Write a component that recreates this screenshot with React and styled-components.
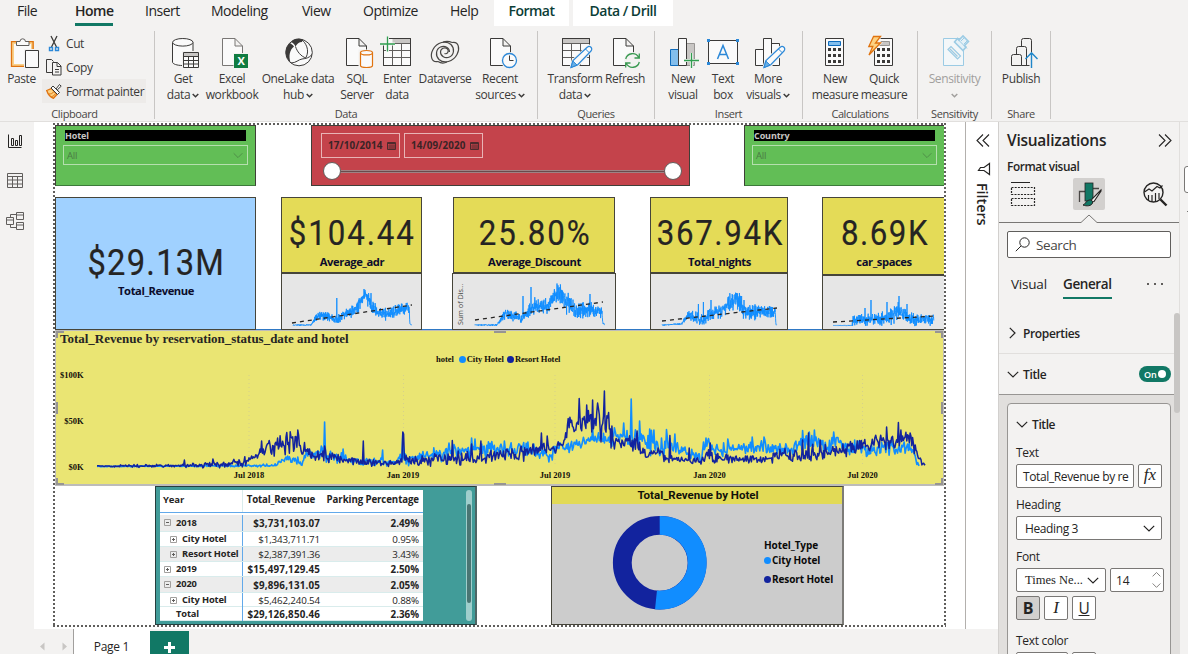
import React from 'react';
import styled, { createGlobalStyle, css } from 'styled-components';

const Global = createGlobalStyle`
  *, *::before, *::after { box-sizing: border-box; }
  body { margin: 0; background: #f3f2f1; overflow: hidden; }
  #root { width: 1188px; height: 654px; overflow: hidden; }
`;

const Window = styled.div`
  width: 1188px;
  height: 654px;
  display: flex;
  flex-direction: column;
  background: #f3f2f1;
  color: #252423;
  font-family: 'Open Sans', 'Noto Sans', sans-serif;
  font-size: 12px;
  letter-spacing: -0.4px;
  white-space: nowrap;
  overflow: hidden;
`;

/* ---------- menu ---------- */
const Menu = styled.nav`
  display: flex;
  height: 26px;
  flex: none;
  padding-left: 17px;
  font-size: 14px;
  letter-spacing: -0.5px;
`;
const MenuItem = styled.div`
  width: ${p => p.$w}px;
  margin-right: ${p => p.$gap}px;
  height: 26px;
  line-height: 22px;
  font-weight: ${p => (p.$bold ? 600 : 400)};
  color: ${p => (p.$context ? '#0b3d36' : '#252423')};
  background: ${p => (p.$context ? '#fff' : 'none')};
  text-align: ${p => (p.$context ? 'center' : 'left')};
  border-bottom: ${p => (p.$active ? '3px solid #117865' : 'none')};
`;

/* ---------- ribbon ---------- */
const Ribbon = styled.div`
  display: flex;
  height: 95px;
  flex: none;
  padding-top: 5px;
`;
const Group = styled.div`
  width: ${p => p.$w}px;
  height: 88px;
  padding-left: ${p => p.$pad || 0}px;
  border-right: 1px solid #c8c6c4;
  display: flex;
  flex-direction: column;
`;
const GroupItems = styled.div`
  display: flex;
  height: 75px;
`;
const GroupName = styled.div`
  margin-left: -${p => p.$pad || 0}px;
  text-align: center;
  font-size: 11px;
  letter-spacing: -0.4px;
  line-height: 16px;
  color: #484644;
  padding-right: ${p => p.$shift || 0}px;
`;
const Tool = styled.div`
  width: ${p => p.$w}px;
  height: 75px;
  padding-top: 5px;
  display: flex;
  flex-direction: column;
  align-items: center;
  color: ${p => (p.$off ? '#a19f9d' : '#3b3a39')};
  line-height: 16px;
  flex: none;
`;
const ToolIcon = styled.svg`
  width: 32px;
  height: 32px;
  flex: none;
  overflow: visible;
  margin-bottom: 3px;
  fill: none;
`;
const ToolLine = styled.div`
  display: flex;
  align-items: center;
  justify-content: center;
  height: 16px;
  gap: 2px;
`;
const ClipList = styled.div`
  display: flex;
  flex-direction: column;
  width: 104px;
`;
const ClipItem = styled.div`
  display: flex;
  align-items: center;
  gap: 4px;
  height: 24px;
  padding-left: 4px;
  color: #3b3a39;
  background: ${p => (p.$hover ? '#edebe9' : 'none')};
`;

const Caret = () => (
  <svg width="7" height="5" viewBox="0 0 7 5">
    <path d="M.7 1l2.800 2.700L6.300 1" fill="none" stroke="currentColor" strokeWidth="1.500" />
  </svg>
);

const K = '#3b3a39';
const Doc = ({ x = 6.5, r = 20, c = K }) => (
  <path d={`M${x} 2.5h${r - 7.5}l7.500 7.500v19.500h-${r}z M${x + r - 7.5} 2.500v7.500h7.500`} fill="#fafafa" stroke={c} />
);
const Grid = ({ x = 3.5, header = x }) => (
  <g>
    <path d={`M${x} 2.500h27v27h-27z`} fill="#fafafa" stroke={K} />
    <path d={`M${header + 0.5} 3h${x + 26 - header}v4h-${x + 26 - header}z`} fill="#c8c6c4" />
    <path d={`M${x} 7.500h27M${x} 14.500h27M${x} 21.500h27M${x + 9} 7.500v22M${x + 18} 7.500v22`} stroke="#605e5c" />
    <path d={`M${x} 2.500h27v27h-27z`} stroke={K} />
  </g>
);
const Pencil = () => (
  <g>
    <path d="M12 31.500l2-7L28.500 11a2.500 2.500 0 0 1 4 3.500L19 29z" fill="#fafafa" stroke="#f3f2f1" strokeWidth="3" />
    <path d="M12 31.500l2-7L28.200 11.300a2.600 2.600 0 0 1 3.800 3.700L18.500 29z" fill="#fafafa" stroke="#2b88d8" strokeWidth="1.200" />
    <path d="M12 31.500l1.800-6.500l4.200 4z" fill="#69afe5" stroke="#2b88d8" />
    <path d="M26.500 13l3.700 3.700" stroke="#2b88d8" />
  </g>
);
const Plus = ({ x, y }) => (
  <g>
    <path d={`M${x} ${y - 7.5}v15M${x - 7.5} ${y}h15`} stroke="#f3f2f1" strokeWidth="3" />
    <path d={`M${x} ${y - 7.5}v15M${x - 7.5} ${y}h15`} stroke="#2f9e4f" strokeWidth="1.300" />
  </g>
);
const Keys = ({ x }) => (
  <g fill={K}>
    {[12, 18, 24].map(y => [0, 5, 10].map(d => <rect key={`${y}${d}`} x={x + d} y={y} width="3" height="3" />))}
  </g>
);

const icons = {
  paste: (
    <g>
      <path d="M6.500 6.500h20v23h-20z" fill="#fafafa" stroke="#f9d08a" strokeWidth="3" />
      <path d="M5.500 5.700h21.600v24.600H5.500z" stroke="#e0730f" strokeWidth="1.300" />
      <path d="M10.500 9.500v-4h3.500a2.700 2.700 0 0 1 5.400 0H23v4z" fill="#fafafa" stroke="#605e5c" />
      <path d="M18 13h16v20H18z" fill="#f3f2f1" />
      <path d="M19.500 14.500h13v17h-13z" fill="#fafafa" stroke={K} />
    </g>
  ),
  get: (
    <g>
      <path d="M5.500 6.500v19.500c0 2 4.500 3.500 10.200 3.500s10.300-1.500 10.300-3.500V6.500z" fill="#fafafa" stroke={K} />
      <ellipse cx="15.800" cy="6.300" rx="10.200" ry="3.800" fill="#fafafa" stroke={K} />
      <path d="M15 15h19v19H15z" fill="#f3f2f1" />
      <path d="M16.500 16.500h15v15h-15z" fill="#fafafa" />
      <path d="M17 17h14v3H17z" fill="#c8c6c4" />
      <path d="M16.500 20.500h15M16.500 24.500h15M16.500 28h15M21.500 20v11M26.500 20v11M16.500 16.500h15v15h-15z" stroke={K} />
    </g>
  ),
  excel: (
    <g>
      <Doc c="#797775" />
      <rect x="17.500" y="17" width="16" height="16" fill="#f3f2f1" />
      <rect x="18" y="18" width="14" height="14" fill="#107c41" />
      <text x="25" y="29" textAnchor="middle" fontSize="11" fontWeight="700" fill="#fff">X</text>
    </g>
  ),
  onelake: (
    <g>
      <circle cx="17" cy="16.500" r="13.300" fill="#fafafa" stroke={K} />
      <path d="M9 6C11 2.500 16 1.500 21 3.200L20 6c-3 0-5 2-6.500 4.500C12.500 8 11 7 9 6z" fill={K} />
      <path d="M8 7c-6 5-5.500 14 .5 19.500C6.500 20 7.500 14 12 10.500c-1.500-2-2.500-2.500-4-3.500z" fill={K} />
      <path d="M13.500 10.500c1.500 5 5.500 10 10.500 11.500M20 4c3.500 2.500 8 10 4 17.500M9 27c5 0 7.500-3.500 11-4 4-.5 7-1 10-4.500" stroke={K} />
    </g>
  ),
  sql: (
    <g>
      <Doc x={5.5} />
      <path d="M17.500 13.500h16v20h-16z" fill="#f3f2f1" />
      <path d="M19.500 17v12.500c0 1.200 2.500 2 6 2s6-.8 6-2V17z" fill="#fafafa" stroke="#e0730f" strokeWidth="1.200" />
      <ellipse cx="25.500" cy="16.700" rx="6" ry="2.200" fill="#fafafa" stroke="#e0730f" strokeWidth="1.200" />
    </g>
  ),
  enter: (
    <g>
      <Grid x={2.5} header={11} />
      <path d="M0 0h14v1.500H0zM0 1h5v6H0z" fill="#f3f2f1" />
      <Plus x={6.5} y={8} />
    </g>
  ),
  dataverse: (
    <g stroke="#484644" strokeWidth="1.200">
      <path d="M9 25.500C2 27 1 19 4 13.500 8 6 17 4 22 8.500c4 4 3 10.500-1.500 12.500-4.500 2-9-1-9-5 0-3.500 4.500-5.500 7-3 2 2.500-.5 5.500-3 4.500" />
      <path d="M23 6.500C30 5 31 13 28 18.500 24 26 15 28 10 23.500c-4-4-3-10.500 1.500-12.500 4.500-2 9 1 9 5" />
      <path d="M9 25.500c3 2 6 2 9 .5M23 6.500c-3-1.500-6-1.500-9-.5" />
    </g>
  ),
  recent: (
    <g>
      <Doc />
      <circle cx="25.500" cy="24.500" r="8.500" fill="#f3f2f1" />
      <circle cx="25.500" cy="24.500" r="7" fill="#fafafa" stroke="#2b88d8" strokeWidth="1.300" />
      <path d="M25.500 19.500v5h4" stroke={K} />
    </g>
  ),
  transform: (<g><Grid /><Pencil /></g>),
  refresh: (
    <g>
      <Doc x={4.5} />
      <circle cx="23.500" cy="24.500" r="8.500" fill="#f3f2f1" />
      <path d="M16.700 23a7 7 0 0 1 13-1.500M30.300 26a7 7 0 0 1-13 1.500M30.300 17.500v4.500h-4.800M16.700 31.500V27h4.800" stroke="#3a9a52" strokeWidth="1.300" />
    </g>
  ),
  visual: (
    <g>
      <path d="M3.500 13.500h8v16h-8z" fill="#83beec" stroke="#0f6cbd" />
      <path d="M19.500 7.500h8v22h-8z" fill="#c8c6c4" stroke="#979593" />
      <path d="M11.500 2.500h8v27h-8z" fill="#fafafa" stroke={K} />
      <Plus x={24.5} y={24.5} />
    </g>
  ),
  textbox: (
    <g>
      <path d="M1.500 4.500h29v23h-29z" fill="#fafafa" stroke={K} />
      <path d="M0 3h3v3H0zM29 3h3v3h-3zM0 26h3v3H0zM29 26h3v3h-3z" fill="#2b88d8" />
      <path d="M10.500 23L16 9.500 21.500 23M12.500 18.500h7" stroke="#2b88d8" strokeWidth="1.500" />
    </g>
  ),
  more: (
    <g>
      <path d="M3.500 13.500h8v16h-8zM19.500 7.500h8v22h-8zM11.500 2.500h8v27h-8z" fill="#fafafa" stroke={K} />
      <Pencil />
    </g>
  ),
  calc: (
    <g>
      <path d="M6.500 2.500h18v27h-18z" fill="#fafafa" stroke={K} />
      <path d="M9.500 5.500h12v4h-12z" fill="#83beec" stroke="#0f6cbd" />
      <Keys x={9} />
    </g>
  ),
  quick: (
    <g>
      <path d="M6.500 2.500h18v27h-18z" fill="#fafafa" stroke={K} />
      <path d="M13 5.500h8.500v4H11z" fill="#c8c6c4" stroke="#979593" />
      <Keys x={9} />
      <path d="M5-1.500L0 9.500h3.500L-.5 21.500 15 6h-4.500L15-1.500z" fill="#f3f2f1" />
      <path d="M5.500.5L.8 10.500h4L1 19 12.500 7h-5l5-6.500z" fill="#fcd283" stroke="#e0730f" strokeWidth="1.300" />
    </g>
  ),
  sensitivity: (
    <g stroke="#9bcbe4" fill="#f3f2f1">
      <path d="M4.500 2.500h20v27h-20z" fill="#f3f7f9" />
      <path d="M9 13.500l3-3 9.500 9.500-3 3zM11 13l7.500 7.500" strokeWidth="1.200" />
      <path d="M15.500 6l3-3.500 1.500 1.500 4-4 5.500 5.500-4 4 1.500 1.500-3 3.500z" fill="#e5f1f7" strokeWidth="1.600" />
      <path d="M19 3.500l9 9M22 5l3-3M25 8l3.500-3.500" />
    </g>
  ),
  publish: (
    <g stroke={K}>
      <path d="M16.500 29.500v-25a2 2 0 0 1 2-2h6a2 2 0 0 1 2 2V16" />
      <path d="M11.500 29.500v-17a2 2 0 0 1 2-2h6a2 2 0 0 1 2 2v17" fill="#f3f2f1" />
      <path d="M6.500 29.500v-9a2 2 0 0 1 2-2h6a2 2 0 0 1 2 2v9z M16.500 29.500h8" fill="#f3f2f1" />
      <path d="M26.500 32V17M20.500 23l6-6.200 6 6.200" stroke="#1f86c9" strokeWidth="1.400" />
    </g>
  ),
};

const RibbonTool = ({ w, icon, lines, caret, off }) => (
  <Tool $w={w} $off={off}>
    <ToolIcon viewBox="0 0 32 32">{icons[icon]}</ToolIcon>
    {lines.map((t, i) => (
      <ToolLine key={i}>
        {t}
        {caret && i === lines.length - 1 && <Caret />}
      </ToolLine>
    ))}
  </Tool>
);

const groups = [
  { name: 'Data', w: 383, pad: 8, tools: [
    [40, 'get', ['Get', 'data'], true], [58, 'excel', ['Excel', 'workbook']], [74, 'onelake', ['OneLake data', 'hub'], true],
    [44, 'sql', ['SQL', 'Server']], [36, 'enter', ['Enter', 'data']], [60, 'dataverse', ['Dataverse']], [50, 'recent', ['Recent', 'sources'], true]] },
  { name: 'Queries', w: 117, pad: 8, tools: [[58, 'transform', ['Transform', 'data'], true], [42, 'refresh', ['Refresh']]] },
  { name: 'Insert', w: 148, pad: 8, tools: [[40, 'visual', ['New', 'visual']], [40, 'textbox', ['Text', 'box']], [50, 'more', ['More', 'visuals'], true]] },
  { name: 'Calculations', w: 115, pad: 7, tools: [[50, 'calc', ['New', 'measure']], [48, 'quick', ['Quick', 'measure']]] },
  { name: 'Sensitivity', w: 74, pad: 7, tools: [[59, 'sensitivity', ['Sensitivity', ''], true, true]] },
  { name: 'Share', w: 59, pad: 0, tools: [[58, 'publish', ['Publish']]] },
];

const CutIcon = () => (
  <svg width="16" height="17" viewBox="0 0 16 17" fill="none">
    <path d="M5 1l5.500 11M11 1L5.500 12" stroke={K} strokeWidth="1.300" />
    <path d="M3.500 12.500h3v3h-3zM9.500 12.500h3v3h-3z" stroke="#2b88d8" strokeWidth="1.400" />
  </svg>
);
const CopyIcon = () => (
  <svg width="16" height="17" viewBox="0 0 16 17" fill="none" stroke={K}>
    <path d="M6 13.500H.5v-13h5l2 2M6.500 3.500h5l3.500 3.500v9H6.500zM11 3.500V7.500h4M9 10.500h4M9 13h4" />
  </svg>
);
const PainterIcon = () => (
  <svg width="16" height="17" viewBox="0 0 16 17" fill="none">
    <path d="M.7 7.500L5.500 5.500l5.500 6-3.500 3.800C4 14 2 11.500.7 7.500z" fill="#fcd283" stroke="#e0730f" strokeWidth="1.300" />
    <path d="M3 11c2 0 3.500-.5 4.500-2M5.500 13.500c2-.3 3-1 3.500-2.500" stroke="#e0730f" />
    <path d="M5 5l2-2 6.500 6.500-2 2zM8.500 4.500l1.500 1.500 3.500-4.500 1.700 1.700-4 3.800 1.500 1.500" fill="#fafafa" stroke={K} />
  </svg>
);

/* ---------- body ---------- */
const Body = styled.div`
  display: flex;
  height: 533px;
  flex: none;
  border-top: 1px solid #e1dfdd;
`;
const Main = styled.div`
  width: 998px;
  display: flex;
  flex-direction: column;
`;
const Work = styled.div`
  display: flex;
  height: 507px;
`;
const Rail = styled.div`
  width: 34px;
  padding: 11px 0 0 6px;
  display: flex;
  flex-direction: column;
  gap: 21px;
  flex: none;
`;
const RailIcon = styled.svg`
  width: 18px;
  height: 18px;
  fill: none;
  stroke: ${p => (p.$active ? '#252423' : '#605e5c')};
  &:last-child { margin-top: 1px; }
`;
const Stage = styled.div`
  width: 931px;
  background: #fff;
  padding: 1px 0 0 19px;
`;
const Page = styled.div`
  width: 893px;
  height: 504px;
  padding: 2px;
  background:
    repeating-linear-gradient(90deg, #605e5c 0 2px, transparent 2px 4px) 0 0 / 100% 2px no-repeat,
    repeating-linear-gradient(90deg, #605e5c 0 2px, transparent 2px 4px) 0 100% / 100% 2px no-repeat,
    repeating-linear-gradient(180deg, #605e5c 0 2px, transparent 2px 4px) 0 0 / 2px 100% no-repeat,
    repeating-linear-gradient(180deg, #605e5c 0 2px, transparent 2px 4px) 100% 0 / 2px 100% no-repeat,
    #fff;
`;
const Row = styled.div`
  display: flex;
  width: 889px;
  height: ${p => p.$h}px;
  margin-bottom: ${p => p.$mb || 0}px;
  padding-left: ${p => p.$pl || 0}px;
  background: ${p => (p.$rule ? 'linear-gradient(#2f78c4, #2f78c4) 0 100% / 100% 1px no-repeat' : 'none')};
`;
const cardFrame = css`
  border: 1px solid #3f3f38;
  width: ${p => p.$w}px;
  margin-right: ${p => p.$gap || 0}px;
  flex: none;
`;
const Slicer = styled.div`
  ${cardFrame}
  border-right: ${p => (p.$clip ? '0' : '1px solid #3f3f38')};
  border-bottom-color: #3c7a3a;
  height: 61px;
  background: #62be56;
  padding: 4px 8px 0 7px;
`;
const SlicerHead = styled.div`
  width: 181px;
  height: 11px;
  margin: 0 0 4px 2px;
  background: #000;
  color: #c8c6c4;
  font-weight: 700;
  font-size: 9px;
  line-height: 11px;
  letter-spacing: -0.1px;
`;
const SlicerBox = styled.div`
  width: 185px;
  height: 20px;
  border: 1px solid #b5dfae;
  color: #4b7a45;
  font-size: 9.5px;
  letter-spacing: -0.2px;
  display: flex;
  align-items: center;
  justify-content: space-between;
  padding: 1px 4px 0 3px;
`;
const DateSlicer = styled.div`
  ${cardFrame}
  height: 61px;
  background: #c4434b;
  padding: 7px 0 0 9px;
`;
const DateRow = styled.div`
  display: flex;
  gap: 4px;
`;
const DateBox = styled.div`
  width: 79px;
  height: 25px;
  border: 1px solid #e9b4b6;
  display: flex;
  align-items: center;
  gap: 5px;
  padding-left: 6px;
  font-size: 9.800px;
  font-weight: 700;
  letter-spacing: 0.150px;
  color: #3a2426;
`;
const Slider = styled.div`
  display: flex;
  align-items: center;
  height: 18px;
  margin: 4px 0 0 2px;
`;
const Knob = styled.div`
  width: 18px;
  height: 18px;
  border-radius: 50%;
  background: #fff;
  border: 1px solid #605e5c;
`;
const Track = styled.div`
  width: 323px;
  height: 3px;
  background: #6b4a4c;
  border: solid #a08284;
  border-width: 1px 0;
`;
const Kpi = styled.div`
  display: flex;
  flex-direction: column;
  width: ${p => p.$w}px;
  margin-right: ${p => p.$gap || 0}px;
  height: 133px;
  flex: none;
`;
const Card = styled.div`
  height: ${p => p.$h}px;
  margin: 0 ${p => p.$inset || 0}px;
  background: ${p => p.$bg};
  border: 1px solid #46453a;
  border-right-width: ${p => (p.$clip ? 0 : 1)}px;
  padding-top: ${p => p.$top}px;
  display: flex;
  flex-direction: column;
  align-items: center;
  ${p => p.$w && css`width: ${p.$w}px; margin-right: ${p.$gap}px; flex: none;`}
`;
const BigValue = styled.div`
  height: 40px;
  line-height: 38px;
  font-family: Roboto, sans-serif;
  font-size: ${p => p.$size || 35.5}px;
  letter-spacing: ${p => p.$ls ?? 2.2}px;
  margin-right: -2px;
  color: #252423;
  -webkit-text-stroke: 0.2px #252423;
  transform: scaleX(0.88);
`;
const CardLabel = styled.div`
  font-weight: 700;
  font-size: 11.2px;
  line-height: 16px;
  letter-spacing: -0.42px;
  margin-right: -1px;
  color: #0c0c2c;
`;
const Spark = styled.svg`
  display: block;
  flex: 1;
  width: 100%;
  background: #e6e6e6;
  border: 1px solid #46453a;
  border-right-width: ${p => (p.$clip ? 0 : 1)}px;
`;

/* deterministic daily noise */
const noise = seed => {
  let s = seed;
  return () => {
    s = (s * 1664525 + 1013904223) % 4294967296;
    return s / 4294967296;
  };
};
const series = (keys, spikes, seed, step, gain = 1.25) => {
  const rnd = noise(seed);
  const pts = [];
  let k = 0;
  const end = keys[keys.length - 1][0];
  for (let x = keys[0][0]; x <= end; x += step) {
    while (k < keys.length - 2 && x > keys[k + 1][0]) k++;
    const [x0, y0, a0] = keys[k];
    const [x1, y1, a1] = keys[k + 1];
    const t = Math.min(1, (x - x0) / (x1 - x0));
    const amp = a0 + (a1 - a0) * t;
    let y = y0 + (y1 - y0) * t + (rnd() + rnd() - 1) * amp * gain;
    const sp = spikes.find(s => Math.abs(s[0] - x) <= step / 2);
    if (sp) y = sp[1];
    pts.push(`${x.toFixed(1)},${y.toFixed(1)}`);
  }
  return pts.join(' ');
};

const sparks = {
  adr: { origin: [281, 273, 141, 57], trend: [292, 323, 412, 305],
    keys: [[293, 325, 0.5], [311, 325, 0.5], [318, 315, 4], [330, 317, 4], [335, 321, 3], [345, 314, 4], [358, 309, 6], [361, 300, 7], [365, 295, 6], [370, 301, 7], [377, 313, 5], [385, 315, 5], [400, 310, 5], [409, 308, 5], [410, 324, 1], [412, 325, 0]],
    spikes: [[336.7, 298], [364, 289]] },
  discount: { origin: [452, 273, 164, 57], trend: [475, 320, 603, 302],
    keys: [[475, 325, 0.5], [497, 325, 0.7], [505, 314, 4], [515, 316, 4], [521, 320, 4], [528, 312, 6], [535, 307, 7], [547, 306, 6], [553, 297, 8], [560, 294, 9], [567, 301, 10], [575, 310, 7], [590, 309, 7], [602, 313, 6], [603, 323, 1], [605, 325, 0]],
    spikes: [[523, 296], [531, 287], [560, 287], [590, 294]] },
  nights: { origin: [650, 273, 138, 57], trend: [662, 321, 777, 308],
    keys: [[662, 325, 0.5], [681, 324, 0.7], [689, 315, 4], [697, 318, 5], [703, 321, 4], [710, 314, 5], [723, 311, 5], [730, 302, 7], [737, 299, 8], [743, 309, 8], [750, 313, 6], [762, 312, 5], [775, 313, 5], [776, 324, 1], [777, 325, 0]],
    spikes: [[698.5, 304], [703.5, 302], [711, 300], [736, 293], [744, 300]] },
  cars: { origin: [822, 275, 122, 55], trend: [833, 322, 935, 316],
    keys: [[833, 325.5, 0.2], [852, 325.5, 0.2], [853, 320, 4.5], [870, 319, 5], [890, 317, 6], [897, 311, 8], [903, 314, 7], [908, 319, 5], [925, 319, 5], [934, 320, 5]],
    spikes: [[865, 308], [871, 300], [887, 302], [899, 296], [907, 304]] },
};
const SparkChart = ({ id, seed, clip, label }) => {
  const s = sparks[id];
  const [ox, oy, w, h] = s.origin;
  const [a, b, c, d] = s.trend;
  return (
    <Spark $clip={clip} viewBox={`${ox + 1} ${oy + 1} ${w - 2} ${h - 2}`} preserveAspectRatio="xMinYMin meet" fill="none">
      <polyline points={series(s.keys, s.spikes, seed, 0.2, 1.5)} stroke="#118dff" strokeWidth="0.900" />
      <path d={`M${a} ${b}L${c} ${d}`} stroke="#252423" strokeWidth="1.300" strokeDasharray="4 4" />
      {label && (
        <text transform="translate(463 325) rotate(-90)" fontSize="7.200" letterSpacing="0" fill="#484644">{label}</text>
      )}
    </Spark>
  );
};

/* ---------- revenue chart ---------- */
const ChartCard = styled.div`
  position: relative;
  width: 889px;
  height: 156px;
  border: 1px solid #bdbcba;
  border-width: 1px 1px 2px;
  background: #eae573;
  font-family: 'Liberation Serif', serif;
  font-weight: 700;
  letter-spacing: 0;
`;
const ChartTitle = styled.div`
  height: 16px;
  padding-left: 4px;
  font-size: 12.96px;
  line-height: 16px;
  color: #252423;
`;
const Legend = styled.div`
  display: flex;
  align-items: center;
  height: 12px;
  margin-top: 6px;
  padding-left: 380px;
  font-size: 8.500px;
  letter-spacing: -0.04px;
  color: #12100a;
`;
const Dot = styled.span`
  width: 7px;
  height: 7px;
  border-radius: 50%;
  background: ${p => p.$c};
  margin: 0 1px 0 ${p => p.$ml || 0}px;
`;
const Plot = styled.svg`
  display: block;
  width: 887px;
  height: 119px;
  fill: none;
  stroke-linejoin: round;
`;
const Handle = styled.i`
  position: absolute;
  width: ${p => p.$w}px;
  height: ${p => p.$h}px;
  border: 0 solid #979593;
  border-width: ${p => p.$b};
  ${p => p.$pos}
`;
const handles = [
  [8, 7, '2px 0 0 2px', 'left:0;top:0;'], [8, 7, '2px 2px 0 0', 'right:0;top:0;'],
  [8, 7, '0 0 2px 2px', 'left:0;bottom:-1px;'], [8, 7, '0 2px 2px 0', 'right:0;bottom:-1px;'],
  [12, 2, '2px 0 0 0', 'left:438px;top:0;'], [12, 2, '2px 0 0 0', 'left:438px;bottom:-1px;'],
  [2, 12, '0 0 0 2px', 'left:0;top:71px;'], [2, 12, '0 0 0 2px', 'right:0;top:71px;'],
];

const resort = series(
  [[97, 466, 0.3], [112, 466.500, 0.4], [120, 466, 1.200], [180, 465.500, 1.500], [200, 465, 2.500], [225, 464, 3.500], [245, 461, 5], [255, 457, 4], [261, 449, 6], [266, 448, 10], [276, 446, 10], [284, 444, 12], [298, 443, 13], [305, 451, 9], [312, 455, 6], [330, 457, 6], [345, 460, 4], [360, 462, 4], [395, 464, 3], [400, 460, 5], [406, 456, 6], [412, 461, 5], [430, 460, 6], [450, 459, 7], [475, 457, 7], [500, 455, 6], [520, 454, 7], [540, 449, 6], [555, 448, 6], [564, 443, 3], [568, 424, 7], [577, 425, 12], [590, 420, 18], [605, 421, 17], [612, 439, 13], [620, 440, 9], [640, 446, 7], [645, 453, 5], [660, 451, 4], [665, 458, 5], [690, 461, 3.500], [703, 461, 4], [707, 452, 4], [715, 459, 5], [740, 458, 5], [765, 458, 5], [790, 455, 7], [810, 454, 9], [830, 453, 7], [850, 449, 7], [870, 444, 7], [895, 440, 9], [912, 441, 8], [917, 454, 4], [922, 463, 2], [926, 465.500, 0]],
  [[184, 460], [213, 459], [262, 441], [269, 440.500], [278, 438], [286.700, 432.500], [292, 438], [297.700, 430], [325, 446], [363.200, 441], [402.500, 432], [403.400, 434], [452, 440.500], [471.500, 444], [481, 441], [541.500, 433], [547, 436], [579, 398.500], [587, 405], [592.500, 400], [598, 403], [604, 391], [608, 418], [637, 431], [670, 435.500], [689, 448], [710, 443], [803, 440], [808.500, 433], [820, 440], [886.500, 427], [898, 422.500], [901, 430], [910, 433]], 97, 0.84);
const city = series(
  [[97, 466.500, 0.3], [180, 466, 0.6], [275, 465.500, 1.500], [281, 461, 3], [287, 459, 3], [298, 460, 4], [302, 464, 2], [306, 454, 5], [320, 453, 7], [340, 457, 7], [355, 462, 4], [370, 461, 5], [395, 463, 3], [402, 456, 5], [408, 460, 5], [420, 457, 5], [440, 454, 7], [455, 451, 7], [470, 450, 9], [500, 449, 8], [530, 449, 7], [550, 455, 8], [558, 445, 6], [575, 446, 7], [590, 440, 7], [612, 438, 8], [620, 436, 11], [640, 438, 10], [660, 445, 13], [678, 449, 9], [690, 454, 7], [701, 455, 8], [706, 441, 7], [715, 450, 6], [740, 450, 6], [765, 446, 7], [790, 449, 7], [800, 443, 9], [830, 445, 9], [850, 447, 8], [870, 450, 7], [890, 447, 9], [908, 448, 6], [914, 452, 5], [917, 464, 2], [920, 465, 1]],
  [[321, 446], [324.800, 422], [343, 449], [382.500, 450], [402.700, 433], [449, 443], [472, 438], [475, 439], [504, 441], [552, 460], [593, 427], [624, 423], [631.200, 399], [639.800, 421], [650, 429], [654, 430], [666.500, 429.500], [675, 434], [698, 459], [728, 439], [752, 437], [764, 437], [802.500, 430.500], [809, 432], [814, 430], [833.500, 432]], 42, 0.84);

const RevenueChart = () => (
  <ChartCard>
    <ChartTitle>Total_Revenue by reservation_status_date and hotel</ChartTitle>
    <Legend>
      hotel<Dot $c="#118dff" $ml={5} />City Hotel<Dot $c="#12239e" $ml={3} />Resort Hotel
    </Legend>
    <Plot viewBox="56 365 887 119">
      {[249, 403.5, 555, 709.5, 862.5].map(x => (
        <path key={x} d={`M${x} 375V467`} stroke="#d5d08c" strokeDasharray="1 3" />
      ))}
      <g fill="#12100a" fontSize="8.500">
        <text x="83.500" y="378" textAnchor="end">$100K</text>
        <text x="83.500" y="424" textAnchor="end">$50K</text>
        <text x="83.500" y="470" textAnchor="end">$0K</text>
        {[['Jul 2018', 249], ['Jan 2019', 403], ['Jul 2019', 555], ['Jan 2020', 709.5], ['Jul 2020', 862.5]].map(([t, x]) => (
          <text key={t} x={x} y="478" textAnchor="middle">{t}</text>
        ))}
      </g>
      <polyline points={city} stroke="#118dff" strokeWidth="1.600" />
      <polyline points={resort} stroke="#12239e" strokeWidth="1.500" />
    </Plot>
    {handles.map(([w, h, b, pos], i) => <Handle key={i} $w={w} $h={h} $b={b} $pos={pos} />)}
  </ChartCard>
);

/* ---------- matrix ---------- */
const Matrix = styled.div`
  width: 322px;
  height: 139px;
  margin-right: 74px;
  border: 1px solid #263f3e;
  border-right: 2px solid #4f6665;
  background: #419c99;
  padding: 3px 3px 3px 4px;
  display: flex;
  justify-content: space-between;
  flex: none;
`;
const MatrixTable = styled.div`
  width: 263px;
  background: #fff;
  letter-spacing: 0;
  color: #252423;
`;
const MRow = styled.div`
  display: grid;
  grid-template-columns: 83px 81px 99px;
  height: ${p => p.$h}px;
  background: ${p => (p.$alt ? '#ececec' : '#fff')};
  border-bottom: ${p => (p.$head ? '1px solid #62a9ea' : '1px solid #d9ecec')};
  margin-bottom: ${p => (p.$head ? 2 : 0)}px;
  font-weight: ${p => (p.$bold ? 700 : 400)};
`;
const Cell = styled.div`
  display: flex;
  align-items: center;
  justify-content: ${p => (p.$left ? 'flex-start' : 'flex-end')};
  padding: ${p => (p.$left ? `0 0 ${p.$up || 0}px ${p.$indent || 3}px` : `${p.$down ?? 2}px ${p.$right ?? 4}px ${p.$up || 0}px 0`)};
  border-right: ${p => (p.$left ? (p.$soft ? '1px solid #d9ecec' : '1px solid #62a9ea') : '0')};
  font-weight: ${p => (p.$left ? 700 : 'inherit')};
  font-size: ${p => p.$fs || 9.8}px;
  letter-spacing: ${p => p.$ls || 0}px;
  gap: 5px;
  line-height: 12px;
`;
const Expander = ({ open }) => (
  <svg width="7" height="7" viewBox="0 0 7 7" fill="none" stroke="#a19f9d">
    <path d="M.5.5h6v6h-6z" />
    <path d={open ? 'M2 3.500h3' : 'M2 3.500h3M3.500 2v3'} stroke="#605e5c" />
  </svg>
);
const Scroll = styled.div`
  width: 6px;
  height: 131px;
  border-radius: 3px;
  background: #9fcecc;
  padding: 14px 0 0 1px;
`;
const Thumb = styled.div`
  width: 4px;
  height: 99px;
  border-radius: 2px;
  background: #4a7573;
`;
const rows = [
  ['2018', '$3,731,103.07', '2.49%', 17, 'open', true],
  ['City Hotel', '$1,343,711.71', '0.95%', 15, 'child', false],
  ['Resort Hotel', '$2,387,391.36', '3.43%', 15, 'child', true],
  ['2019', '$15,497,129.45', '2.50%', 15, 'closed', false],
  ['2020', '$9,896,131.05', '2.05%', 16, 'open', true],
  ['City Hotel', '$5,462,240.54', '0.88%', 14, 'child', false],
  ['Total', '$29,126,850.46', '2.36%', 14, 'total', false],
];

/* ---------- donut ---------- */
const DonutCard = styled.div`
  width: 293px;
  height: 139px;
  border: 1px solid #46453a;
  border-right: 2px solid #7d7c79;
  background: #ccc;
  flex: none;
`;
const DonutTitle = styled.div`
  height: 17px;
  background: #e2da56;
  text-align: center;
  font-family: Roboto, sans-serif;
  font-weight: 700;
  font-size: 11.500px;
  letter-spacing: 0;
  line-height: 17px;
  padding-left: 2px;
  color: #12120a;
`;
const DonutBody = styled.div`
  display: flex;
`;
const DonutLegend = styled.div`
  padding: 33px 0 0 16px;
  font-weight: 700;
  font-size: 10px;
  letter-spacing: -0.1px;
  color: #0a0a0a;
  line-height: 16px;
`;
const LegendLine = styled.div`
  display: flex;
  align-items: center;
  height: 14px;
  margin-bottom: 5px;
`;

/* ---------- filters ---------- */
const Filters = styled.div`
  width: 33px;
  background: #fff;
  border-left: 1px solid #b3b0ad;
  display: flex;
  flex-direction: column;
  align-items: center;
  padding: 12px 0 0 1px;
`;
const FilterGlyph = styled.svg`
  width: 14px;
  height: 14px;
  margin: 15px 0 0 2px;
  fill: none;
  stroke: #252423;
  stroke-width: 1.2;
`;
const FiltersText = styled.div`
  writing-mode: vertical-rl;
  font-size: 14.5px;
  font-weight: 600;
  line-height: 16px;
  letter-spacing: -0.1px;
  margin: 7px 0 0 -1px;
`;

/* ---------- page tabs ---------- */
const PageBar = styled.div`
  display: flex;
  height: 25px;
`;
const Arrows = styled.div`
  width: 73px;
  padding: 13px 0 0 39px;
  display: flex;
  gap: 17px;
`;
const PageTab = styled.div`
  width: 77px;
  height: 25px;
  background: #fff;
  border-left: 1px solid #a19f9d;
  text-align: center;
  line-height: 35px;
  letter-spacing: -0.3px;
  padding-right: 1px;
  color: #252423;
`;
const AddTab = styled.div`
  width: 39px;
  height: 23px;
  margin-top: 2px;
  background: #117865;
  display: flex;
  justify-content: center;
  padding-top: 11px;
`;

/* ---------- format pane ---------- */
const Pane = styled.div`
  width: 182px;
  border-left: 1px solid #d2d0ce;
  border-right: 1px solid #e1dfdd;
  position: relative;
  flex: none;
`;
const PaneHead = styled.div`
  height: 36px;
  padding: 0 7px 0 8px;
  display: flex;
  align-items: center;
  justify-content: space-between;
  font-size: 15.500px;
  font-weight: 600;
  letter-spacing: -0.25px;
`;
const PaneSub = styled.div`
  height: 20px;
  line-height: 17px;
  padding-left: 8px;
  font-weight: 600;
  letter-spacing: -0.38px;
  font-size: 11.800px;
`;
const ModeBar = styled.svg`
  display: block;
  width: 180px;
  height: 46px;
  fill: none;
`;
const Search = styled.div`
  width: 164px;
  height: 27px;
  margin: 7px 0 0 8px;
  border: 1px solid #605e5c;
  border-radius: 2px;
  background: #fff;
  display: flex;
  align-items: center;
  gap: 6px;
  padding-left: 7px;
  font-size: 13.500px;
  color: #484644;
`;
const PaneTabs = styled.div`
  display: flex;
  height: 42px;
  margin-top: 13px;
  padding-left: 12px;
  font-size: 13.500px;
  line-height: 26px;
`;
const PaneTab = styled.div`
  width: ${p => p.$w}px;
  margin-right: ${p => p.$gap}px;
  height: 28px;
  font-weight: ${p => (p.$on ? 600 : 400)};
  letter-spacing: ${p => (p.$on ? -0.4 : -0.2)}px;
  border-bottom: ${p => (p.$on ? '2px solid #117865' : 'none')};
`;
const Section = styled.div`
  height: ${p => p.$h}px;
  padding: 0 8px 0 ${p => p.$pl}px;
  border-bottom: 1px solid ${p => p.$line};
  display: flex;
  align-items: center;
  gap: ${p => p.$g}px;
  font-weight: 600;
  font-size: 12px;
  letter-spacing: -0.35px;
`;
const Toggle = styled.div`
  width: 32px;
  height: 16px;
  margin-left: auto;
  border-radius: 8px;
  background: #117865;
  color: #fff;
  font-size: 9px;
  letter-spacing: -0.2px;
  display: flex;
  align-items: center;
  padding: 0 5px 0 5px;
  justify-content: space-between;
`;
const ToggleDot = styled.span`
  width: 8px;
  height: 8px;
  border-radius: 50%;
  background: #fff;
`;
const Sheet = styled.div`
  height: 259px;
  background: #e1dfdd;
  padding: 8px 0 0 8px;
`;
const SheetCard = styled.div`
  width: 164px;
  height: 262px;
  background: #f3f2f1;
  border: 1px solid #979593;
  border-radius: 4px 4px 0 0;
  padding: 11px 0 0 8px;
`;
const SheetTitle = styled.div`
  display: flex;
  align-items: center;
  gap: 4px;
  height: 19px;
  font-weight: 600;
`;
const FieldName = styled.div`
  height: 20px;
  line-height: 18px;
  letter-spacing: -0.3px;
  margin-top: ${p => p.$mt}px;
`;
const FieldRow = styled.div`
  display: flex;
  gap: 4px;
  margin-bottom: ${p => p.$mb || 0}px;
`;
const Field = styled.div`
  width: ${p => p.$w}px;
  height: 24px;
  border: 1px solid #797775;
  border-radius: 2px;
  background: ${p => (p.$on ? '#d2d0ce' : '#fff')};
  display: flex;
  align-items: center;
  justify-content: ${p => (p.$center ? 'center' : 'space-between')};
  padding: ${p => p.$p || '0'};
  font-family: ${p => (p.$serif ? "'Liberation Serif', serif" : 'inherit')};
  font-size: ${p => p.$fs || 12}px;
  letter-spacing: ${p => p.$ls ?? -0.38}px;
  font-style: ${p => (p.$italic ? 'italic' : 'normal')};
  font-weight: ${p => (p.$on ? 700 : 400)};
  text-decoration: ${p => (p.$under ? 'underline' : 'none')};
  overflow: hidden;
`;
const PaneScroll = styled.div`
  position: absolute;
  right: -1px;
  top: 191px;
  width: 6px;
  height: 100px;
  border-radius: 3px;
  background: #c8c6c4;
`;
const Edge = styled.svg`
  width: 8px;
  height: 532px;
  fill: none;
`;

const Chevron = ({ w = 12, dir = 'down', c = '#252423' }) => (
  <svg width={dir === 'right' ? 7 : w} height={dir === 'right' ? 12 : 7} viewBox={dir === 'right' ? '0 0 7 12' : '0 0 12 7'} fill="none" stroke={c} strokeWidth="1.200">
    <path d={dir === 'right' ? 'M.8.8L6 6 .8 11.200' : dir === 'up' ? 'M.8 6L6 .8 11.200 6' : 'M.8.8L6 6 11.200.8'} />
  </svg>
);
const Double = ({ left }) => (
  <svg width="14" height="13" viewBox="0 0 14 13" fill="none" stroke="#252423" strokeWidth="1.100">
    <path d={left ? 'M7 .5l-6 6 6 6M13 .5l-6 6 6 6' : 'M1 .5l6 6-6 6M7 .5l6 6-6 6'} />
  </svg>
);
const Stepper = styled.div`
  display: flex;
  flex-direction: column;
  gap: 4px;
  margin-right: 2px;
`;
const Calendar = () => (
  <svg width="9" height="9" viewBox="0 0 9 9" fill="none" stroke="#4e2a2d">
    <path d="M.5 1.500h8v7h-8zM.5 2.500h8" />
    <path d="M1 5h7M1 7h7M3 3v5M5 3v5M7 3v5" strokeWidth="0.600" />
  </svg>
);

export default function App() {
  return (
    <Window>
      <Global />
      <Menu>
        <MenuItem $w={20} $gap={38}>File</MenuItem>
        <MenuItem $w={38} $gap={32} $bold $active>Home</MenuItem>
        <MenuItem $w={34} $gap={32}>Insert</MenuItem>
        <MenuItem $w={58} $gap={33}>Modeling</MenuItem>
        <MenuItem $w={29} $gap={32}>View</MenuItem>
        <MenuItem $w={55} $gap={32}>Optimize</MenuItem>
        <MenuItem $w={28} $gap={16}>Help</MenuItem>
        <MenuItem $w={75} $gap={4} $bold $context>Format</MenuItem>
        <MenuItem $w={100} $gap={0} $bold $context>Data / Drill</MenuItem>
      </Menu>
      <Ribbon>
        <Group $w={155} $pad={1}>
          <GroupItems>
            <RibbonTool w={41} icon="paste" lines={['Paste']} />
            <ClipList>
              <ClipItem><CutIcon />Cut</ClipItem>
              <ClipItem><CopyIcon />Copy</ClipItem>
              <ClipItem $hover><PainterIcon />Format painter</ClipItem>
            </ClipList>
          </GroupItems>
          <GroupName $shift={6}>Clipboard</GroupName>
        </Group>
        {groups.map(g => (
          <Group key={g.name} $w={g.w} $pad={g.pad}>
            <GroupItems>
              {g.tools.map(([w, icon, lines, caret, off]) => (
                <RibbonTool key={icon} w={w} icon={icon} lines={lines} caret={caret} off={off} />
              ))}
            </GroupItems>
            <GroupName $pad={g.pad}>{g.name}</GroupName>
          </Group>
        ))}
      </Ribbon>
      <Body>
        <Main>
          <Work>
            <Rail>
              <RailIcon $active viewBox="0 0 18 18"><path d="M2.500 1.500v13h13M5.500 5.500h2v7h-2zM9.500 7.500h2v5h-2zM13.500 2.500h2v10h-2z" /></RailIcon>
              <RailIcon viewBox="0 0 18 18"><path d="M1.500 1.500h15v14h-15zM1.500 4.500h15M1.500 8h15M1.500 12h15M6.500 4.500v11M11.500 4.500v11" /></RailIcon>
              <RailIcon viewBox="0 0 18 18"><path d="M.5 5.500h7v7h-7zM.5 8h7M10.500.5h7v7h-7zM10.500 3h7M10.500 10.500h7v7h-7zM10.500 13h7M4.500 5.500v-3h6M4.500 12.500v3h6" /></RailIcon>
            </Rail>
            <Stage>
              <Page>
                <Row $h={61} $mb={11}>
                  <Slicer $w={201} $gap={55}>
                    <SlicerHead>Hotel</SlicerHead>
                    <SlicerBox>All<Chevron w={10} c="#4f8f48" /></SlicerBox>
                  </Slicer>
                  <DateSlicer $w={379} $gap={54}>
                    <DateRow>
                      <DateBox>17/10/2014<Calendar /></DateBox>
                      <DateBox>14/09/2020<Calendar /></DateBox>
                    </DateRow>
                    <Slider><Knob /><Track /><Knob /></Slider>
                  </DateSlicer>
                  <Slicer $w={200} $clip>
                    <SlicerHead>Country</SlicerHead>
                    <SlicerBox>All<Chevron w={10} c="#4f8f48" /></SlicerBox>
                  </Slicer>
                </Row>
                <Row $h={133} $rule>
                  <Card $w={201} $gap={25} $h={133} $bg="#a0d1ff" $top={45}>
                    <BigValue $size={37.2} $ls={1.4}>$29.13M</BigValue>
                    <CardLabel>Total_Revenue</CardLabel>
                  </Card>
                  <Kpi $w={141} $gap={30}>
                    <Card $h={76} $bg="#e4db57" $top={16}><BigValue>$104.44</BigValue><CardLabel>Average_adr</CardLabel></Card>
                    <SparkChart id="adr" seed={7} />
                  </Kpi>
                  <Kpi $w={164} $gap={34}>
                    <Card $h={76} $inset={1} $bg="#e4db57" $top={16}><BigValue>25.80%</BigValue><CardLabel>Average_Discount</CardLabel></Card>
                    <SparkChart id="discount" seed={19} label="Sum of Dis..." />
                  </Kpi>
                  <Kpi $w={138} $gap={34}>
                    <Card $h={76} $bg="#e4db57" $top={16}><BigValue $ls={1.9}>367.94K</BigValue><CardLabel>Total_nights</CardLabel></Card>
                    <SparkChart id="nights" seed={31} />
                  </Kpi>
                  <Kpi $w={122}>
                    <Card $h={78} $bg="#e4db57" $top={16} $clip><BigValue $ls={1.7}>8.69K</BigValue><CardLabel>car_spaces</CardLabel></Card>
                    <SparkChart id="cars" seed={5} clip />
                  </Kpi>
                </Row>
                <RevenueChart />
                <Row $h={139} $pl={100}>
                  <Matrix>
                    <MatrixTable>
                      <MRow $h={23} $head $bold>
                        <Cell $left $soft $up={3} $fs={9.5} $ls={-0.1}>Year</Cell>
                        <Cell $down={0} $up={3} $right={9} $fs={9.7} $ls={-0.17}>Total_Revenue</Cell>
                        <Cell $down={0} $up={3} $fs={9.7} $ls={-0.1}>Parking Percentage</Cell>
                      </MRow>
                      {rows.map(([name, rev, pct, h, kind, alt], i) => (
                        <MRow key={i} $h={h} $alt={alt} $bold={kind !== 'child'}>
                          <Cell $left $up={kind === 'open' ? 1 : 0} $fs={9.3} $ls={-0.12} $indent={kind === 'child' ? 10 : kind === 'total' ? 16 : 4}>
                            {kind !== 'total' && <Expander open={kind === 'open'} />}{name}
                          </Cell>
                          <Cell $ls={kind === 'child' ? -0.15 : 0.18} $down={2}>{rev}</Cell>
                          <Cell $ls={kind === 'child' ? -0.15 : 0} $down={2}>{pct}</Cell>
                        </MRow>
                      ))}
                    </MatrixTable>
                    <Scroll><Thumb /></Scroll>
                  </Matrix>
                  <DonutCard>
                    <DonutTitle>Total_Revenue by Hotel</DonutTitle>
                    <DonutBody>
                      <svg width="196" height="120" viewBox="552 504 196 120" fill="none" strokeWidth="18.800">
                        <circle cx="659.700" cy="562.700" r="37.400" stroke="#12239e" />
                        <path d="M659.700 525.300A37.400 37.400 0 1 1 656 599.900" stroke="#118dff" />
                      </svg>
                      <DonutLegend>
                        Hotel_Type
                        <LegendLine><Dot $c="#118dff" />City Hotel</LegendLine>
                        <LegendLine><Dot $c="#12239e" />Resort Hotel</LegendLine>
                      </DonutLegend>
                    </DonutBody>
                  </DonutCard>
                </Row>
              </Page>
            </Stage>
            <Filters>
              <Double left />
              <FilterGlyph viewBox="0 0 14 14">
                <path d="M12.500 1.500v11L7 8.500H1.500L3.500 5.500H7z" />
              </FilterGlyph>
              <FiltersText>Filters</FiltersText>
            </Filters>
          </Work>
          <PageBar>
            <Arrows>
              <svg width="6" height="9" viewBox="0 0 6 9"><path d="M5.500.5v8L1 4.500z" fill="#c8c6c4" /></svg>
              <svg width="6" height="9" viewBox="0 0 6 9"><path d="M.5.5v8L5 4.500z" fill="#c8c6c4" /></svg>
            </Arrows>
            <PageTab>Page 1</PageTab>
            <AddTab>
              <svg width="11" height="11" viewBox="0 0 11 11"><path d="M5.500 0v11M0 5.500h11" stroke="#fff" strokeWidth="3" /></svg>
            </AddTab>
          </PageBar>
        </Main>
        <Pane>
          <PaneHead>Visualizations<Double /></PaneHead>
          <PaneSub>Format visual</PaneSub>
          <ModeBar viewBox="999 178 180 46">
            <path d="M1011 182.500h19" stroke="#252423" />
            <path d="M1011.500 187.500h23v7h-23zM1011.500 198.500h23v7h-23z" stroke="#252423" strokeWidth="1.200" strokeDasharray="2 1.200" />
            <rect x="1073" y="178" width="32" height="32" rx="2" fill="#d2d0ce" />
            <path d="M1079.500 202v-10.500h6M1093 188.500h6" stroke="#484644" strokeWidth="1.300" />
            <rect x="1085" y="183" width="8" height="18" fill="#117865" stroke="#252423" strokeWidth="0.800" />
            <path d="M1101 190l-9 9-1 3 3-.5 7-10.500z" fill="#f3f2f1" stroke="#252423" strokeWidth="1.100" />
            <path d="M1083 205c2 0 2.500-4 6-5 2.500-.5 4 1 3.500 3-1 3-6 3.500-9.500 2z" fill="#117865" stroke="#252423" />
            <circle cx="1153.500" cy="192.500" r="9.500" stroke="#252423" strokeWidth="1.400" />
            <path d="M1160.500 199.500l6 6" stroke="#252423" strokeWidth="2.400" />
            <path d="M1144.500 192l4.500-3 3 2 5-4.500 3 1.500 2.500-2.500M1148.500 200v-5M1152 201.500V195M1155.500 201v-8M1159 199v-6" stroke="#252423" strokeWidth="1.200" />
            <path d="M999 222.500h82l8-7.500 8 7.500h82" stroke="#797775" />
          </ModeBar>
          <Search>
            <svg width="15" height="15" viewBox="0 0 15 15" fill="none" stroke="#252423"><circle cx="9.500" cy="5.500" r="4.700" /><path d="M6 9L.8 14.200" /></svg>
            Search
          </Search>
          <PaneTabs>
            <PaneTab $w={36} $gap={16}>Visual</PaneTab>
            <PaneTab $w={49} $gap={35} $on>General</PaneTab>
            <svg width="16" height="26" viewBox="0 0 16 26"><path d="M0 12h2v2H0zM7 12h2v2H7zM14 12h2v2h-2z" fill="#605e5c" /></svg>
          </PaneTabs>
          <Section $h={41} $g={7} $pl={10} $line="#e1dfdd"><Chevron dir="right" />Properties</Section>
          <Section $h={41} $g={4} $pl={8} $line="#979593"><Chevron />Title<Toggle>On<ToggleDot /></Toggle></Section>
          <Sheet>
            <SheetCard>
              <SheetTitle><Chevron />Title</SheetTitle>
              <FieldName $mt={10}>Text</FieldName>
              <FieldRow>
                <Field $w={118} $p="0 6px">Total_Revenue by re</Field>
                <Field $w={24} $center $serif $italic $fs={17} $ls={0} $p="0 0 3px">fx</Field>
              </FieldRow>
              <FieldName $mt={8}>Heading</FieldName>
              <Field $w={146} $p="0 6px 0 8px">Heading 3<Chevron /></Field>
              <FieldName $mt={8}>Font</FieldName>
              <FieldRow $mb={4}>
                <Field $w={90} $p="0 6px 0 8px" $serif $fs={12.5} $ls={0}>Times Ne...<Chevron /></Field>
                <Field $w={54} $p="0 0 0 5px" $ls={-0.2}>14
                  <Stepper><Chevron dir="up" w={9} c="#797775" /><Chevron w={9} c="#797775" /></Stepper>
                </Field>
              </FieldRow>
              <FieldRow>
                <Field $w={24} $center $on $fs={16} $p="0 0 1px">B</Field>
                <Field $w={24} $center $serif $italic $fs={17} $p="0 0 1px">I</Field>
                <Field $w={24} $center $under $fs={15.5} $p="0 0 1px">U</Field>
              </FieldRow>
              <FieldName $mt={12}>Text color</FieldName>
              <FieldRow><Field $w={52} /><Field $w={24} /></FieldRow>
            </SheetCard>
          </Sheet>
          <PaneScroll />
        </Pane>
        <Edge viewBox="0 0 8 532">
          <path d="M9 44.500H7a2.500 2.500 0 0 0-2.500 2.500v21a2.500 2.500 0 0 0 2.500 2.500h2" stroke="#797775" fill="#fff" />
          <path d="M7 89.500h1" stroke="#797775" />
        </Edge>
      </Body>
    </Window>
  );
}
